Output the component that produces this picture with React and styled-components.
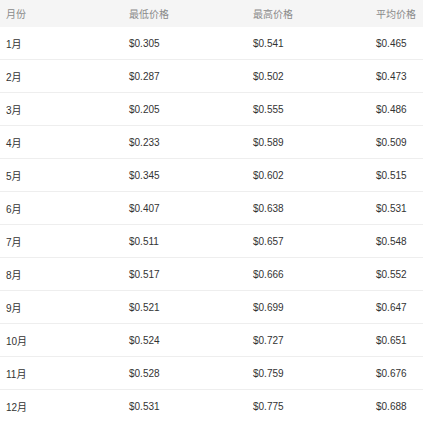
import React from 'react'
import styled, { createGlobalStyle } from 'styled-components'

const prices = [
  ['1月', '$0.305', '$0.541', '$0.465'],
  ['2月', '$0.287', '$0.502', '$0.473'],
  ['3月', '$0.205', '$0.555', '$0.486'],
  ['4月', '$0.233', '$0.589', '$0.509'],
  ['5月', '$0.345', '$0.602', '$0.515'],
  ['6月', '$0.407', '$0.638', '$0.531'],
  ['7月', '$0.511', '$0.657', '$0.548'],
  ['8月', '$0.517', '$0.666', '$0.552'],
  ['9月', '$0.521', '$0.699', '$0.647'],
  ['10月', '$0.524', '$0.727', '$0.651'],
  ['11月', '$0.528', '$0.759', '$0.676'],
  ['12月', '$0.531', '$0.775', '$0.688'],
]

const App = () => {
  return (
    <>
      <GlobalStyle />
      <StyledTable>
        <StyledHeader>
          <StyledHeadCell>月份</StyledHeadCell>
          <StyledHeadCell>最低价格</StyledHeadCell>
          <StyledHeadCell>最高价格</StyledHeadCell>
          <StyledHeadCell>平均价格</StyledHeadCell>
        </StyledHeader>
        {prices.map((row) => (
          <StyledRow key={row[0]}>
            {row.map((value, i) => (
              <StyledCell key={i}>{value}</StyledCell>
            ))}
          </StyledRow>
        ))}
      </StyledTable>
    </>
  )
}

const GlobalStyle = createGlobalStyle`
  body {
    margin: 0;
    background: #fff;
    font-family: 'Liberation Sans', Arial, 'Noto Sans CJK SC', sans-serif;
  }
`

const StyledTable = styled.div`
  width: 423px;
  display: flex;
  flex-direction: column;
`

const columns = `
  display: grid;
  grid-template-columns: 123px 124px 123px 1fr;
  align-items: center;
`

const StyledHeader = styled.div`
  ${columns}
  height: 27px;
  background: #f5f5f5;
`

const StyledRow = styled.div`
  ${columns}
  height: 32px;
  border-bottom: 1px solid #eeeeee;
`

const StyledHeadCell = styled.div`
  padding-left: 6px;
  font-size: 10px;
  color: #8a8a8a;
`

const StyledCell = styled.div`
  padding-left: 6px;
  font-size: 10px;
  color: #333;
`

export default App
